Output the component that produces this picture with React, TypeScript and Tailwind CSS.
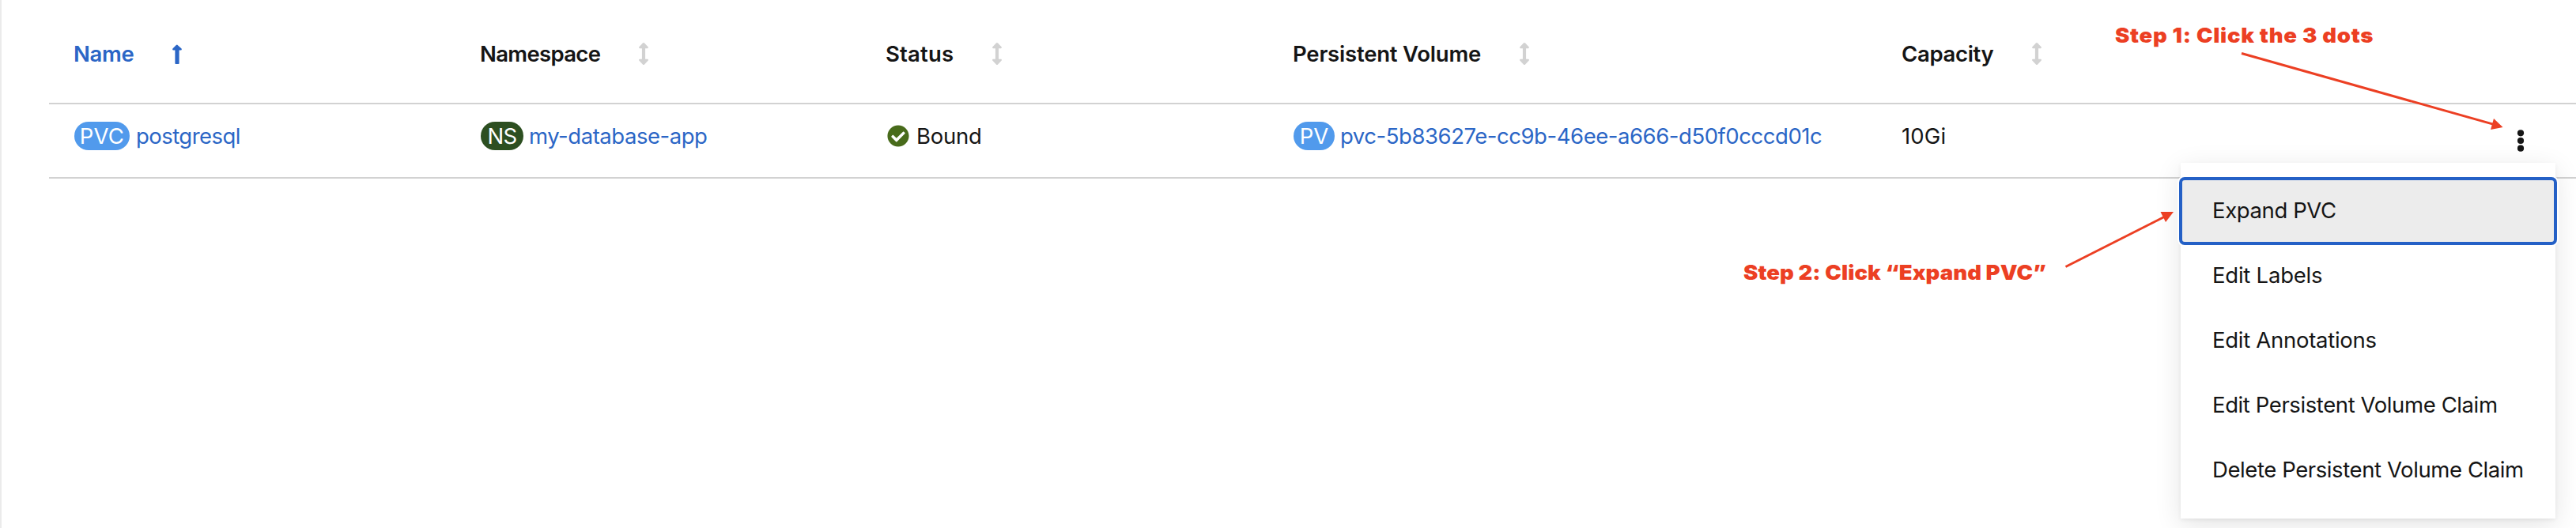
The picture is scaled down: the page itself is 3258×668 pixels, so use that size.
import type { ReactNode } from "react";

function SortAsc() {
  return (
    <svg width="12" height="26" viewBox="0 0 12 26" className="relative top-[0.5px]" fill="#2b66c6">
      <path d="M6 0.5 L11.6 5.6 Q12.3 7.2 10.8 7.4 H8.6 V24.2 Q8.6 25 7.8 25 H4.2 Q3.4 25 3.4 24.2 V7.4 H1.2 Q-0.3 7.2 0.4 5.6 L4.9 1 Q6 0 7.1 1 Z" />
    </svg>
  );
}

function SortNone() {
  return (
    <svg width="12" height="28" viewBox="0 0 12 28" fill="#d2d2d2">
      <path d="M4.9 0.6 Q6 -0.4 7.1 0.6 L11.6 5.2 Q12.5 7 10.9 7.2 H8.1 V20.8 H10.9 Q12.5 21 11.6 22.8 L7.1 27.4 Q6 28.4 4.9 27.4 L0.4 22.8 Q-0.5 21 1.1 20.8 H3.9 V7.2 H1.1 Q-0.5 7 0.4 5.2 Z" />
    </svg>
  );
}

function CheckCircle() {
  return (
    <svg width="28" height="28" viewBox="0 0 512 512" fill="#486b1b">
      <path d="M504 256c0 136.967-111.033 248-248 248S8 392.967 8 256 119.033 8 256 8s248 111.033 248 248zM227.314 387.314l184-184c6.248-6.248 6.248-16.379 0-22.627l-22.627-22.627c-6.248-6.249-16.379-6.249-22.628 0L216 308.118l-70.059-70.059c-6.248-6.248-16.379-6.248-22.628 0l-22.627 22.627c-6.248 6.248-6.248 16.379 0 22.627l104 104c6.249 6.249 16.379 6.249 22.628.001z" />
    </svg>
  );
}

function Header({ label, spacing, active }: { label: string; spacing: string; active?: boolean }) {
  return (
    <div className={`flex h-9 items-center gap-[48.5px] font-semibold ${active ? "text-[#2b66c6]" : "text-[#151515]"}`}>
      <span className={spacing}>{label}</span>
      {active ? <SortAsc /> : <SortNone />}
    </div>
  );
}

function Badge({ className, children }: { className: string; children: ReactNode }) {
  return (
    <span className={`flex h-9 shrink-0 items-center justify-center rounded-full text-white ${className}`}>
      {children}
    </span>
  );
}

const menuItems = [
  { label: "Edit Labels", spacing: "tracking-[-0.228px]" },
  { label: "Edit Annotations", spacing: "tracking-[-0.279px]" },
  { label: "Edit Persistent Volume Claim", spacing: "tracking-[-0.4px]" },
  { label: "Delete Persistent Volume Claim", spacing: "tracking-[-0.41px]" },
];

export default function App() {
  return (
    <div className="relative h-[668px] w-[3258px] overflow-hidden border-l-2 border-[#ebebeb] bg-white pl-[60px] font-['Inter',sans-serif] text-[27.5px] leading-9 whitespace-nowrap text-[#151515]">
      <div className="grid h-[132px] grid-cols-[514px_513px_515px_770px_1fr] border-b-2 border-[#d2d2d2] pt-[50px] pl-[31px]">
        <Header label="Name" spacing="tracking-[-0.311px]" active />
        <Header label="Namespace" spacing="tracking-[-0.667px]" />
        <Header label="Status" spacing="tracking-[0.187px]" />
        <Header label="Persistent Volume" spacing="tracking-[-0.2px]" />
        <Header label="Capacity" spacing="tracking-[-0.327px]" />
      </div>

      <div className="grid h-[94px] grid-cols-[514px_513px_514px_770px_1fr] border-b-2 border-[#d2d2d2] pt-[22px]">
        <div className="flex h-9 items-center gap-2 pl-8">
          <Badge className="w-[70px] bg-[#519aec] tracking-[0.2px]">PVC</Badge>
          <a className="tracking-[-0.55px] text-[#2b66c6]">postgresql</a>
        </div>
        <div className="flex h-9 items-center gap-[7px] pl-8">
          <Badge className="w-[54px] bg-[#2d4f21] tracking-[-0.719px]">NS</Badge>
          <a className="tracking-[-0.47px] text-[#2b66c6]">my-database-app</a>
        </div>
        <div className="flex h-9 items-center gap-[9px] pl-[33px]">
          <CheckCircle />
          <span className="tracking-[-0.248px]">Bound</span>
        </div>
        <div className="flex h-9 items-center gap-[7px] pl-[33px]">
          <Badge className="w-[52px] bg-[#519aec]">PV</Badge>
          <a className="tracking-[-0.448px] text-[#2b66c6]">pvc-5b83627e-cc9b-46ee-a666-d50f0cccd01c</a>
        </div>
        <div className="flex h-9 items-center justify-between pr-[65px] pl-8">
          <span className="tracking-[0.149px]">10Gi</span>
          <svg width="10" height="28" viewBox="0 0 10 28" className="relative top-[6px]" fill="#151515">
            <circle cx="5" cy="4.3" r="4.1" />
            <circle cx="5" cy="14" r="4.1" />
            <circle cx="5" cy="23.7" r="4.1" />
          </svg>
        </div>
      </div>

      <div className="absolute top-[206px] left-[2756px] flex h-[450px] w-[474px] flex-col bg-white py-[20px] shadow-[0_8px_32px_0_rgba(3,3,3,0.11),0_2px_5px_0_rgba(3,3,3,0.06)]">
        <div className="-mx-[2px] -mt-[2px] -mb-[2px] flex h-[86px] shrink-0 items-center rounded-[7px] border-4 border-[#2460c6] bg-[#ececec] pb-[3px] pl-[38px] tracking-[-0.391px] shadow-[0_0_0_2px_#ffffff]">
          Expand PVC
        </div>
        {menuItems.map((item) => (
          <div key={item.label} className={`flex h-[82px] shrink-0 items-center pb-[3px] pl-10 ${item.spacing}`}>
            {item.label}
          </div>
        ))}
      </div>

      <div className="absolute top-[27px] left-[2673px] origin-left scale-x-[1.06] text-[26px] font-black tracking-[0.66px] text-[#ec3f23]">
        Step 1: Click the 3 dots
      </div>
      <div className="absolute top-[327px] left-[2203px] origin-left scale-x-[1.06] text-[26px] font-black tracking-[0.07px] text-[#ec3f23]">
        Step 2: Click “Expand PVC”
      </div>
      <svg className="absolute top-0 -left-[2px]" width="3258" height="668" viewBox="0 0 3258 668" fill="#ec3f23" stroke="#ec3f23">
        <path d="M2835 67.5 L3154 157.4" strokeWidth="3" />
        <path d="M3165.5 161 L3154 150 L3150 164 Z" stroke="none" />
        <path d="M2612.5 337.5 L2738 274" strokeWidth="3" />
        <path d="M2749 268 L2732.5 268 L2739 281 Z" stroke="none" />
      </svg>
    </div>
  );
}
